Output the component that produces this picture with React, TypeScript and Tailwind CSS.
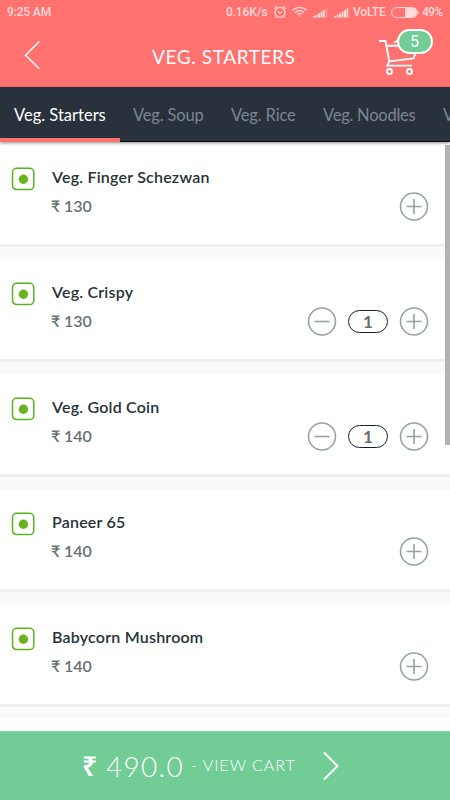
import React from "react";

type Item = { name: string; price: number; quantity?: number };

const items: Item[] = [
  { name: "Veg. Finger Schezwan", price: 130 },
  { name: "Veg. Crispy", price: 130, quantity: 1 },
  { name: "Veg. Gold Coin", price: 140, quantity: 1 },
  { name: "Paneer 65", price: 140 },
  { name: "Babycorn Mushroom", price: 140 },
];

function StatusBar() {
  return (
    <div className="flex h-6 items-center pl-[7px] pr-[7px] font-['Roboto',sans-serif] text-[12px] font-medium leading-6 tracking-[-0.150px] text-[#ffdada]">
      <span className="w-[60px] whitespace-nowrap">9:25 AM</span>
      <span className="ml-auto w-[42px] whitespace-nowrap">0.16K/s</span>
      <svg className="ml-[5px]" width="14" height="14" viewBox="0 0 14 14" fill="none" stroke="currentColor" strokeWidth="1.2">
        <circle cx="7" cy="7.4" r="5" />
        <path d="M4.8 6.3 7 8.2l2.2-1.4M1.2 3.6 4 1.3M12.8 3.6 10 1.3M3.6 11.3 2.3 12.7M10.4 11.3l1.3 1.4" />
      </svg>
      <svg className="ml-[5px]" width="15" height="12" viewBox="0 0 15 12" fill="none" stroke="currentColor" strokeWidth="1.4">
        <path d="M.7 4.2C4.5.4 10.500.4 14.300 4.200M3 6.500c2.500-2.500 6.500-2.500 9 0M5.200 8.600c1.300-1.200 3.300-1.200 4.600 0" />
        <circle cx="7.500" cy="10.300" r=".9" fill="currentColor" stroke="none" />
      </svg>
      <svg className="ml-[6px]" width="15" height="11" viewBox="0 0 15 11" fill="currentColor">
        <path d="M0 9h2v1.500H0zM2.500 7.800h2v2.700h-2zM5 6.500h2v4H5zM7.500 4.800h2v5.700h-2zM10 3h2v7.500h-2z" />
        <path d="M12.700 1h1.600v9.500h-1.600z" opacity=".3" />
      </svg>
      <svg className="ml-[6px]" width="15" height="11" viewBox="0 0 15 11" fill="currentColor">
        <path d="M0 9h2v1.500H0zM2.500 7.800h2v2.700h-2zM5 6.500h2v4H5zM7.500 4.800h2v5.700h-2zM10 3h2v7.500h-2zM12.500 1h1.700v9.500h-1.700z" />
      </svg>
      <span className="ml-[4px] w-[34px] whitespace-nowrap">VoLTE</span>
      <svg className="ml-[4px]" width="28" height="11" viewBox="0 0 28 11">
        <rect x=".6" y=".6" width="25.800" height="9.800" rx="4.900" fill="none" stroke="currentColor" strokeWidth="1" />
        <path d="M14 1h7.500a4.500 4.500 0 0 1 0 9H14z" fill="currentColor" />
        <path d="M27 4v3" stroke="currentColor" />
      </svg>
      <span className="ml-[3px] w-[21px] whitespace-nowrap text-[12px] tracking-[-0.700px]">49%</span>
    </div>
  );
}

function Header() {
  return (
    <header className="h-[87px] bg-[#ff7270] text-white">
      <StatusBar />
      <div className="flex h-[63px]">
        <svg className="ml-[23px] mt-[15px]" width="20" height="32" viewBox="0 0 20 32" fill="none" stroke="currentColor" strokeWidth="1.500">
          <path d="M16.300 2.500 2.500 16.200l13.800 13.500" />
        </svg>
        <h1 className="ml-[109px] mt-[19px] w-[150px] whitespace-nowrap font-['Lato',sans-serif] text-[19px] leading-7 tracking-[0.600px]">
          VEG. STARTERS
        </h1>
        <div className="relative ml-[75px] mt-[4px] h-[50px] w-[60px]">
          <svg width="60" height="50" viewBox="0 0 60 50" fill="none" stroke="currentColor" strokeWidth="1.900">
            <path d="M2 13h6.500l3.800 20.400M9 17.800h14M12.300 33.400l24.200-3L39 24M12.300 33.400l-2 4.200H35M17 14.500l6-3" />
            <circle cx="12.500" cy="43.500" r="2.500" />
            <circle cx="32.500" cy="43.500" r="2.500" />
          </svg>
          <span className="absolute left-[20px] top-[1px] flex h-[25px] w-[36px] items-center justify-center rounded-full border-2 border-white bg-[#71cc96] pr-px pt-px font-['Roboto',sans-serif] text-[16px] font-normal leading-none">
            5
          </span>
        </div>
      </div>
    </header>
  );
}

function Tabs() {
  return (
    <nav className="relative z-10 flex h-[55px] overflow-hidden whitespace-nowrap bg-[#29313a] font-['Lato',sans-serif] text-[16.500px] leading-[57px] text-[#7b8594] shadow-[0_1px_3px_rgba(0,0,0,0.45)]">
      <span className="h-[55px] w-[120px] shrink-0 border-b-4 border-[#ff7270] pl-[14px] text-white">Veg. Starters</span>
      <span className="w-[97px] shrink-0 border-b border-[#050709] pl-[13px] tracking-[-0.150px]">Veg. Soup</span>
      <span className="w-[92px] shrink-0 border-b border-[#050709] pl-[14px] tracking-[-0.150px]">Veg. Rice</span>
      <span className="w-[121px] shrink-0 border-b border-[#050709] pl-[14px] tracking-[-0.250px]">Veg. Noodles</span>
      <span className="w-[20px] shrink-0 border-b border-[#050709] pl-[13px]">V</span>
    </nav>
  );
}

function RoundButton({ plus = false }: { plus?: boolean }) {
  return (
    <button aria-label={plus ? "Add" : "Remove"} className="text-[#97a2a2]">
      <svg className="block" width="30" height="31" viewBox="0 0 30 31" fill="none" stroke="currentColor" strokeWidth="1.600">
        <circle cx="15" cy="15.500" r="13.500" />
        <path d={plus ? "M7.500 15.500h15M15 8v15" : "M7.500 15.500h15"} />
      </svg>
    </button>
  );
}

function MenuItem({ name, price, quantity }: Item) {
  return (
    <li className="h-[115px] shrink-0 border-b-[12px] border-[#fafafa]">
      <div className="flex h-[103px] border-b-[3px] border-[#efefef] bg-white font-['Lato','Noto_Sans',sans-serif]">
        <svg className="ml-[11px] mt-[23px] shrink-0" width="24" height="24" viewBox="0 0 24 24">
          <rect x="1.500" y="1.300" width="21.300" height="21.300" rx="4.200" fill="none" stroke="#59b41b" strokeWidth="1.500" />
          <circle cx="12.400" cy="12.300" r="4.700" fill="#67b51d" />
        </svg>
        <div className="ml-[17px] mt-[22px] whitespace-nowrap">
          <h2 className="text-[16px] font-semibold leading-[22px] tracking-[0.210px] text-[#263238]">{name}</h2>
          <p className="-ml-px mt-[7px] text-[16px] font-semibold leading-[22px] tracking-[-0.100px] text-[#667173]">₹ {price}</p>
        </div>
        <div className="ml-auto mr-[21px] mt-[47px] flex h-[31px] items-center">
          {quantity && (
            <>
              <RoundButton />
              <span className="ml-[11px] mr-[11px] flex h-[23px] w-[40px] items-center justify-center rounded-full border border-[#102328] text-[17px] font-bold leading-none text-[#6b6b6b]">
                {quantity}
              </span>
            </>
          )}
          <RoundButton plus />
        </div>
      </div>
    </li>
  );
}

export default function App() {
  return (
    <div className="flex h-[800px] w-[450px] flex-col overflow-hidden bg-white">
      <Header />
      <Tabs />
      <main className="relative min-h-0 flex-1 overflow-hidden pt-[2px]">
        <ul>
          {items.map((item) => (
            <MenuItem key={item.name} {...item} />
          ))}
        </ul>
        <div className="absolute right-0 top-[3px] h-[300px] w-[5px] bg-[#b2b2b2]" />
      </main>
      <footer className="flex h-[69px] shrink-0 items-center border-t border-[#82d2a2] bg-[#71cc96] text-white">
        <span className="ml-[82px] w-[20px] pb-[2px] font-['Noto_Sans',sans-serif] text-[27px] font-semibold leading-none">₹</span>
        <span className="ml-[4px] w-[80px] whitespace-nowrap font-['Lato',sans-serif] text-[28px] font-light leading-none tracking-[1.300px]">490.0</span>
        <span className="ml-[5px] w-[105px] whitespace-nowrap pb-[2px] font-['Lato',sans-serif] text-[16px] font-light leading-none tracking-[1px]">- VIEW CART</span>
        <svg className="ml-[26px]" width="18" height="30" viewBox="0 0 18 30" fill="none" stroke="currentColor" strokeWidth="2">
          <path d="M2 1.500 15.500 15 2 28.500" />
        </svg>
      </footer>
    </div>
  );
}
